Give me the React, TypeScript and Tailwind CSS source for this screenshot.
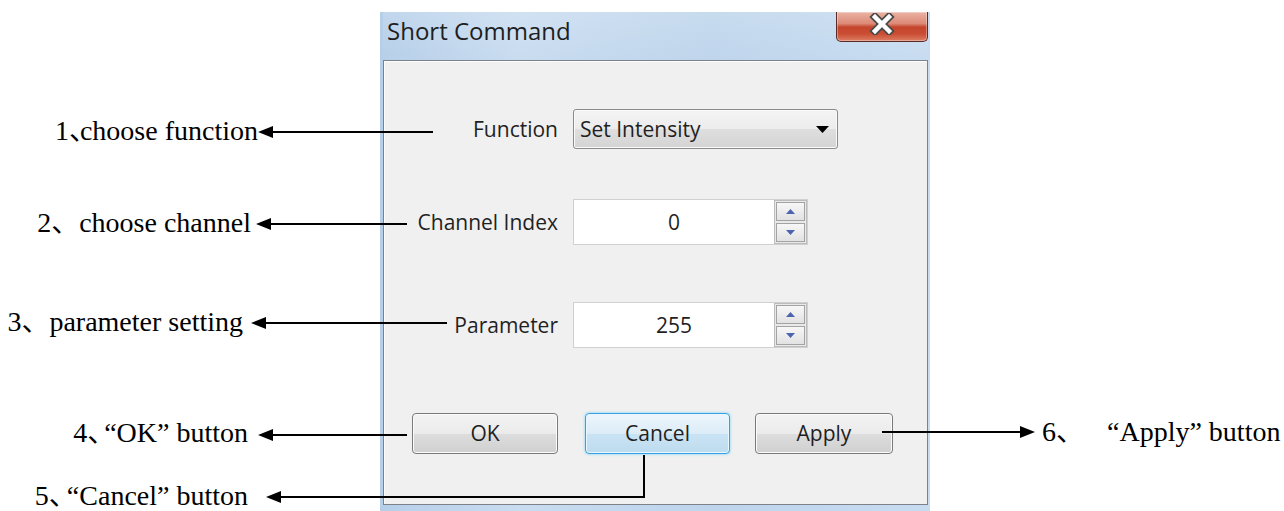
import React from "react";

const uiFont = "font-['Open_Sans','Noto_Sans',sans-serif]";
const noteFont = "font-['Liberation_Serif','Noto_Sans_CJK_SC',serif]";

function CloseButton() {
  return (
    <div className="flex h-[30px] w-[92px] items-center justify-center rounded-b-[5px] border border-t-0 border-[#5a2b24] bg-[linear-gradient(to_bottom,#eab2a4_0%,#dc8a76_40%,#c4452c_52%,#c94d33_75%,#dd7d63_100%)] shadow-[inset_0_0_0_1px_rgba(255,255,255,0.35)]">
      <svg width="26" height="22" viewBox="0 0 26 22" className="-mt-[5px]">
        <path d="M6 4L20 18M20 4L6 18" stroke="#4a4a4a" strokeWidth="8" strokeLinecap="square" />
        <path d="M6 4L20 18M20 4L6 18" stroke="#ffffff" strokeWidth="4.5" strokeLinecap="square" />
      </svg>
    </div>
  );
}

function ComboBox({ value }: { value: string }) {
  return (
    <div className="flex h-[40px] w-[265px] items-center justify-between rounded-[3px] border border-[#8b8b8b] bg-[linear-gradient(to_bottom,#f4f4f4_0%,#ececec_50%,#dedede_51%,#d4d4d4_100%)] pl-[6px] pr-[8px] shadow-[inset_0_0_0_1px_#fafafa]">
      <span className="text-[21px] leading-none text-[#1f1f1f]">{value}</span>
      <svg width="13" height="7" viewBox="0 0 13 7">
        <polygon points="0,0 13,0 6.5,7" fill="#000" />
      </svg>
    </div>
  );
}

function SpinButton({ up }: { up?: boolean }) {
  return (
    <div className="flex h-[19px] w-[29px] items-center justify-center border border-[#a3a3a3] bg-[linear-gradient(to_bottom,#f7f7f7,#e2e2e2)]">
      <svg width="9" height="5" viewBox="0 0 9 5">
        {up ? (
          <polygon points="0,5 9,5 4.5,0" fill="#4c64ad" />
        ) : (
          <polygon points="0,0 9,0 4.5,5" fill="#4c64ad" />
        )}
      </svg>
    </div>
  );
}

function SpinBox({ value }: { value: string }) {
  return (
    <div className="flex h-[46px] w-[235px] border border-[#d0d0d0] bg-white">
      <div className="flex flex-1 items-center justify-center text-[21px] leading-none text-[#1f1f1f]">
        {value}
      </div>
      <div className="flex w-[33px] flex-col justify-center gap-[2px] border border-[#bcbcbc] bg-[#e9e9e9] px-[1px]">
        <SpinButton up />
        <SpinButton />
      </div>
    </div>
  );
}

function Button({ label, width, focused }: { label: string; width: string; focused?: boolean }) {
  const base =
    "flex h-[41px] items-center justify-center rounded-[4px] border text-[21px] leading-none text-[#1f1f1f]";
  const look = focused
    ? "border-[#3a9fde] bg-[linear-gradient(to_bottom,#edf6fc_0%,#dcecf7_50%,#c9e3f3_51%,#bedcef_100%)] shadow-[0_0_3px_#6fd0fb,inset_0_0_0_1px_#e9f7fe]"
    : "border-[#7a7a7a] bg-[linear-gradient(to_bottom,#f3f3f3_0%,#ebebeb_50%,#dddddd_51%,#d0d0d0_100%)] shadow-[inset_0_0_0_1px_#fbfbfb]";
  return <div className={`${base} ${look} ${width}`}>{label}</div>;
}

function FieldRow({ label, children }: { label: string; children: React.ReactNode }) {
  return (
    <div className="flex items-center gap-[15px]">
      <div className="w-[174px] text-right text-[21px] leading-none text-[#1f1f1f]">{label}</div>
      {children}
    </div>
  );
}

function Dialog() {
  return (
    <div
      className={`${uiFont} flex h-[499px] w-[550px] flex-col bg-[linear-gradient(to_right,#b6cfe9_0%,#c9dcf0_25%,#bed5ec_60%,#c8dcf1_100%)] pb-[6px] pl-[3px] pr-[2px]`}
    >
      <div className="flex h-[48px] items-start justify-between bg-[linear-gradient(to_bottom,rgba(255,255,255,0.15),rgba(255,255,255,0))]">
        <span className="pl-[4px] pt-[7px] text-[24px] leading-none text-[#1e1e1e]">Short Command</span>
        <CloseButton />
      </div>
      <div className="flex flex-1 flex-col border border-[#7d8188] bg-[#f0f0f0] shadow-[inset_1px_1px_0_#fcfcfc]">
        <div className="mt-[48px]">
          <FieldRow label="Function">
            <ComboBox value="Set Intensity" />
          </FieldRow>
        </div>
        <div className="mt-[50px]">
          <FieldRow label="Channel Index">
            <SpinBox value="0" />
          </FieldRow>
        </div>
        <div className="mt-[57px]">
          <FieldRow label="Parameter">
            <SpinBox value="255" />
          </FieldRow>
        </div>
        <div className="mt-[65px] flex pl-[28px]">
          <Button label="OK" width="w-[146px]" />
          <div className="ml-[27px]">
            <Button label="Cancel" width="w-[145px]" focused />
          </div>
          <div className="ml-[25px]">
            <Button label="Apply" width="w-[138px]" />
          </div>
        </div>
      </div>
    </div>
  );
}

function Callouts() {
  return (
    <>
      <svg
        className="pointer-events-none absolute left-0 top-0"
        width="1284"
        height="511"
        viewBox="0 0 1284 511"
      >
        <g stroke="#000" strokeWidth="2" fill="none">
          <path d="M270 132H433" />
          <path d="M268 224H407" />
          <path d="M264 323H447" />
          <path d="M270 435H407" />
          <path d="M279 497H644V455" />
          <path d="M882 432H1022" />
        </g>
        <g fill="#000">
          <polygon points="258,132 273,126 273,138" />
          <polygon points="256,224 271,218 271,230" />
          <polygon points="251,323 266,317 266,329" />
          <polygon points="258,435 273,429 273,441" />
          <polygon points="266,497 281,491 281,503" />
          <polygon points="1035,432 1020,426 1020,438" />
        </g>
      </svg>
      <div className={`${noteFont} text-[28px] leading-none text-black`}>
        <span className="absolute right-[1026px] top-[117px] whitespace-nowrap">
          1<span className="tracking-[-17px]">、</span>choose function
        </span>
        <span className="absolute right-[1033px] top-[209px] whitespace-nowrap">2、choose channel</span>
        <span className="absolute right-[1041px] top-[308px] whitespace-nowrap">3、parameter setting</span>
        <span className="absolute right-[1036px] top-[419px] whitespace-nowrap">
          4<span className="tracking-[-11px]">、</span>“OK” button
        </span>
        <span className="absolute right-[1036px] top-[482px] whitespace-nowrap">
          5<span className="tracking-[-10px]">、</span>“Cancel” button
        </span>
        <span className="absolute left-[1042px] top-[418px] whitespace-nowrap">
          6、<span className="ml-[23px]">“Apply” button</span>
        </span>
      </div>
    </>
  );
}

export default function App() {
  return (
    <div className="relative h-[511px] w-[1284px] overflow-hidden bg-white">
      <div className="pl-[380px] pt-[12px]">
        <Dialog />
      </div>
      <Callouts />
    </div>
  );
}
